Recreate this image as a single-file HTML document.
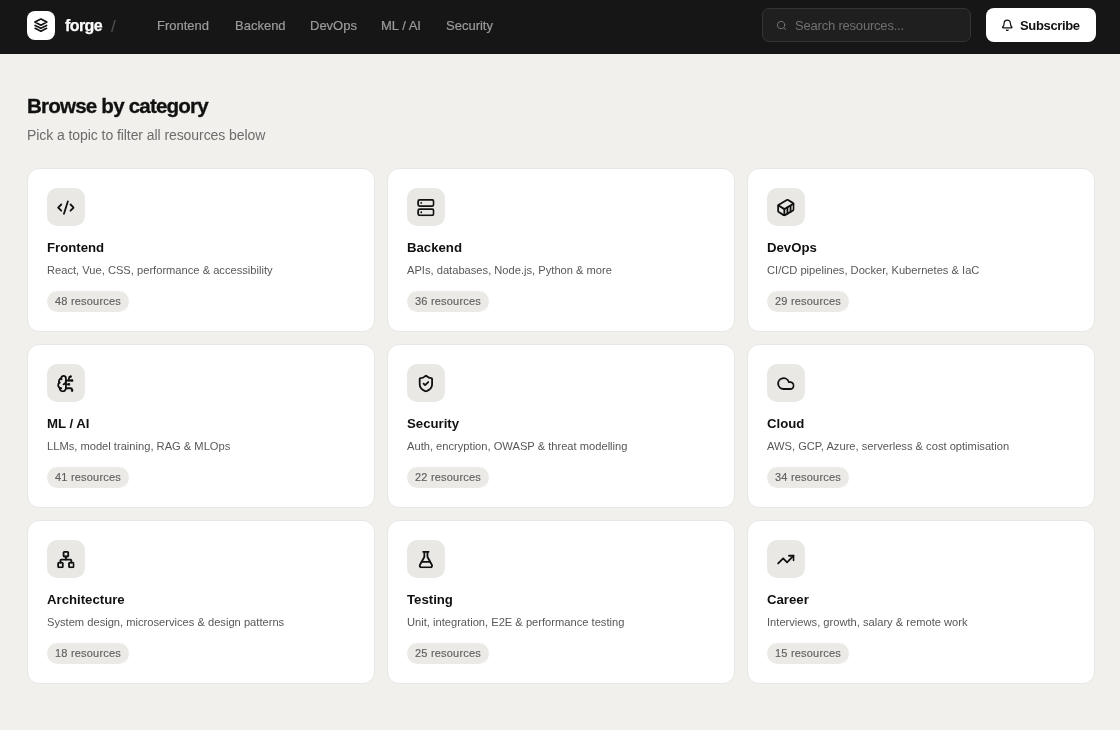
<!DOCTYPE html>
<html>
<head>
<meta charset="utf-8">
<style>
*{box-sizing:border-box;margin:0;padding:0}
html,body{width:1120px;height:731px;overflow:hidden;background:#fff;font-family:"Liberation Sans",sans-serif}
.page{will-change:transform;position:relative;width:1120px;height:730px;background:#f1f0ec}
header{will-change:transform;position:absolute;left:0;top:0;width:1120px;height:54px;background:#161616}
.logo{position:absolute;left:27px;top:11px;width:28px;height:29px;background:#fff;border-radius:8px}
.logo svg{position:absolute;left:0;top:0;width:28px;height:29px}
.brand{position:absolute;left:65px;top:16px;font-size:16px;font-weight:700;color:#fff;-webkit-text-stroke:0.25px #fff;letter-spacing:-0.6px;line-height:20px}
.slash{position:absolute;left:111px;top:16px;font-size:17px;color:#505050;line-height:22px}
.nav a{position:absolute;top:17px;-webkit-text-stroke:0.2px #9b9b9b;font-size:13px;color:#9b9b9b;text-decoration:none;line-height:18px}
.search{position:absolute;left:762px;top:8px;width:208.5px;height:34px;background:#1f1f1f;border:1px solid #343434;border-radius:7px}
.search svg{position:absolute;left:13.2px;top:11.2px;width:11px;height:11px}
.search span{position:absolute;left:32px;top:7.8px;font-size:13px;color:#707070;line-height:18px;letter-spacing:-0.2px}
.sub{position:absolute;left:986px;top:8px;width:109.5px;height:34px;background:#fff;border-radius:8px}
.sub svg{position:absolute;left:15.2px;top:10.8px;width:12.5px;height:12.5px}
.sub span{position:absolute;left:34px;top:8.5px;font-size:13px;font-weight:700;color:#111;line-height:18px;letter-spacing:-0.35px}
h1{position:absolute;left:27px;top:93.2px;-webkit-text-stroke:0.3px #111;font-size:20.6px;font-weight:700;color:#111;letter-spacing:-0.82px;line-height:26px}
.subtitle{position:absolute;left:27px;top:125px;font-size:14px;color:#6c6c6c;line-height:20px;letter-spacing:-0.07px}
.grid{position:absolute;left:27px;top:168px;width:1068px;display:grid;grid-template-columns:repeat(3,348px);column-gap:12px;row-gap:12px}
.card{height:164px;background:#fff;border:1px solid #e7e7e5;border-radius:12px;padding:19px}
.ic{width:38px;height:38px;border-radius:10px;background:#e9e8e5;display:flex;align-items:center;justify-content:center}
.ic svg{width:18.6px;height:18.6px;transform:translate(-0.4px,0.3px)}
.t{margin-top:11.9px;font-size:13.2px;font-weight:700;color:#111;line-height:20px}
.d{margin-top:3.8px;font-size:11.15px;color:#585858;line-height:16px}
.p{display:block;width:fit-content;margin-top:13.3px;height:21.5px;-webkit-text-stroke:0.15px #606060;padding:0 8px;border-radius:11px;background:#ebeae6;font-size:11px;color:#606060;line-height:21px;letter-spacing:0.2px}
</style>
</head>
<body>
<div class="page">
<header>
  <div class="logo"><svg viewBox="0 0 28 29" fill="none" stroke="#111" stroke-width="1.65" stroke-linecap="round" stroke-linejoin="round"><path d="M7.9 11.1 13.9 8 19.8 11.1 13.9 14.2Z"/><path d="M8.1 14.4 13.9 17.3 19.6 14.4"/><path d="M8.1 17.3 13.9 20.2 19.6 17.3"/></svg></div>
  <div class="brand">forge</div>
  <div class="slash">/</div>
  <nav class="nav">
    <a style="left:157px">Frontend</a>
    <a style="left:235px">Backend</a>
    <a style="left:310px">DevOps</a>
    <a style="left:381px">ML / AI</a>
    <a style="left:446px">Security</a>
  </nav>
  <div class="search"><svg viewBox="0 0 24 24" fill="none" stroke="#777" stroke-width="2" stroke-linecap="round" stroke-linejoin="round"><circle cx="11" cy="11" r="8"/><path d="m21 21-4.3-4.3"/></svg><span>Search resources...</span></div>
  <div class="sub"><svg viewBox="0 0 24 24" fill="none" stroke="#111" stroke-width="2.35" stroke-linecap="round" stroke-linejoin="round"><path d="M10.268 21a2 2 0 0 0 3.464 0"/><path d="M3.262 15.326A1 1 0 0 0 4 17h16a1 1 0 0 0 .74-1.673C19.41 13.956 18 12.499 18 8A6 6 0 0 0 6 8c0 4.499-1.411 5.956-2.738 7.326"/></svg><span>Subscribe</span></div>
</header>
<h1>Browse by category</h1>
<div class="subtitle">Pick a topic to filter all resources below</div>
<div class="grid">
  <div class="card">
    <div class="ic"><svg viewBox="0 0 24 24" fill="none" stroke="#111" stroke-width="2.35" stroke-linecap="round" stroke-linejoin="round"><path d="m18 16 4-4-4-4"/><path d="m6 8-4 4 4 4"/><path d="m14.5 4-5 16"/></svg></div>
    <div class="t">Frontend</div>
    <div class="d">React, Vue, CSS, performance &amp; accessibility</div>
    <div class="p">48 resources</div>
  </div>
  <div class="card">
    <div class="ic"><svg viewBox="0 0 24 24" fill="none" stroke="#111" stroke-width="2.35" stroke-linecap="round" stroke-linejoin="round"><rect width="20" height="8" x="2" y="2" rx="2" ry="2"/><rect width="20" height="8" x="2" y="14" rx="2" ry="2"/><line x1="6" x2="6.01" y1="6" y2="6"/><line x1="6" x2="6.01" y1="18" y2="18"/></svg></div>
    <div class="t">Backend</div>
    <div class="d">APIs, databases, Node.js, Python &amp; more</div>
    <div class="p">36 resources</div>
  </div>
  <div class="card">
    <div class="ic"><svg viewBox="0 0 24 24" fill="none" stroke="#111" stroke-width="2.35" stroke-linecap="round" stroke-linejoin="round"><path d="M22 7.7c0-.6-.4-1.2-.8-1.5l-6.3-3.9a1.72 1.72 0 0 0-1.7 0l-10.3 6c-.5.2-.9.8-.9 1.4v6.6c0 .5.4 1.2.8 1.5l6.3 3.9a1.72 1.72 0 0 0 1.7 0l10.3-6c.5-.3.9-1 .9-1.5Z"/><path d="M10 21.9V14L2.1 9.1"/><path d="m10 14 11.9-6.9"/><path d="M14 19.8v-8.1"/><path d="M18 17.5V9.4"/></svg></div>
    <div class="t">DevOps</div>
    <div class="d">CI/CD pipelines, Docker, Kubernetes &amp; IaC</div>
    <div class="p">29 resources</div>
  </div>
  <div class="card">
    <div class="ic"><svg viewBox="0 0 24 24" fill="none" stroke="#111" stroke-width="2.35" stroke-linecap="round" stroke-linejoin="round"><path d="M12 5a3 3 0 1 0-5.997.125 4 4 0 0 0-2.526 5.77 4 4 0 0 0 .556 6.588A4 4 0 1 0 12 18Z"/><path d="M9 13a4.5 4.5 0 0 0 3-4"/><path d="M6.003 5.125A3 3 0 0 0 6.401 6.5"/><path d="M3.477 10.896a4 4 0 0 1 .585-.396"/><path d="M6 18a4 4 0 0 1-1.967-.516"/><path d="M12 13h4"/><path d="M12 18h6a2 2 0 0 1 2 2v1"/><path d="M12 8h8"/><path d="M16 8V5a2 2 0 0 1 2-2"/><circle cx="16" cy="13" r=".5"/><circle cx="18" cy="3" r=".5"/><circle cx="20" cy="21" r=".5"/><circle cx="20" cy="8" r=".5"/></svg></div>
    <div class="t">ML / AI</div>
    <div class="d">LLMs, model training, RAG &amp; MLOps</div>
    <div class="p">41 resources</div>
  </div>
  <div class="card">
    <div class="ic"><svg viewBox="0 0 24 24" fill="none" stroke="#111" stroke-width="2.35" stroke-linecap="round" stroke-linejoin="round"><path d="M20 13c0 5-3.5 7.5-7.66 8.950a1 1 0 0 1-.67-.01C7.500 20.500 4 18 4 13V6a1 1 0 0 1 1-1c2 0 4.500-1.200 6.240-2.720a1.170 1.170 0 0 1 1.520 0C14.510 3.810 17 5 19 5a1 1 0 0 1 1 1z"/><path d="m9 12 2 2 4-4"/></svg></div>
    <div class="t">Security</div>
    <div class="d">Auth, encryption, OWASP &amp; threat modelling</div>
    <div class="p">22 resources</div>
  </div>
  <div class="card">
    <div class="ic"><svg viewBox="0 0 24 24" fill="none" stroke="#111" stroke-width="2.35" stroke-linecap="round" stroke-linejoin="round"><path d="M17.5 19H9a7 7 0 1 1 6.71-9h1.79a4.5 4.5 0 1 1 0 9Z"/></svg></div>
    <div class="t">Cloud</div>
    <div class="d">AWS, GCP, Azure, serverless &amp; cost optimisation</div>
    <div class="p">34 resources</div>
  </div>
  <div class="card">
    <div class="ic"><svg viewBox="0 0 24 24" fill="none" stroke="#111" stroke-width="2.35" stroke-linecap="round" stroke-linejoin="round"><rect x="16" y="16" width="6" height="6" rx="1"/><rect x="2" y="16" width="6" height="6" rx="1"/><rect x="9" y="2" width="6" height="6" rx="1"/><path d="M5 16v-3a1 1 0 0 1 1-1h12a1 1 0 0 1 1 1v3"/><path d="M12 12V8"/></svg></div>
    <div class="t">Architecture</div>
    <div class="d">System design, microservices &amp; design patterns</div>
    <div class="p">18 resources</div>
  </div>
  <div class="card">
    <div class="ic"><svg viewBox="0 0 24 24" fill="none" stroke="#111" stroke-width="2.35" stroke-linecap="round" stroke-linejoin="round"><path d="M14 2v6a2 2 0 0 0 .245.96l5.51 10.08A2 2 0 0 1 18 22H6a2 2 0 0 1-1.755-2.960l5.510-10.080A2 2 0 0 0 10 8V2"/><path d="M6.453 15h11.094"/><path d="M8.5 2h7"/></svg></div>
    <div class="t">Testing</div>
    <div class="d">Unit, integration, E2E &amp; performance testing</div>
    <div class="p">25 resources</div>
  </div>
  <div class="card">
    <div class="ic"><svg viewBox="0 0 24 24" fill="none" stroke="#111" stroke-width="2.35" stroke-linecap="round" stroke-linejoin="round"><polyline points="22 7 13.5 15.5 8.5 10.5 2 17"/><polyline points="16 7 22 7 22 13"/></svg></div>
    <div class="t">Career</div>
    <div class="d">Interviews, growth, salary &amp; remote work</div>
    <div class="p">15 resources</div>
  </div>
</div>
</div>
</body>
</html>
